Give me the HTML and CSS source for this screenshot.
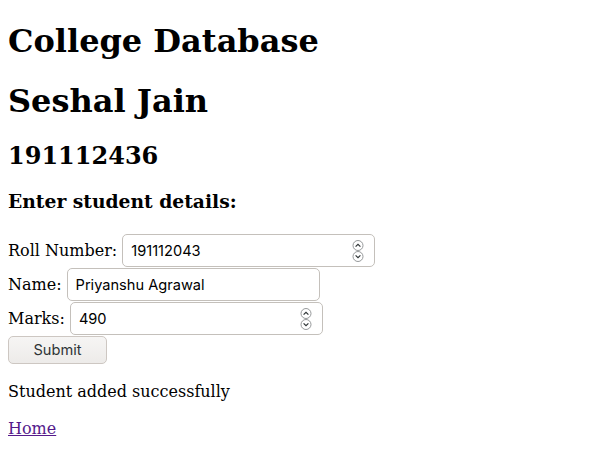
FILE: index.html
```html
<!DOCTYPE html>
<html>
<head>
<meta charset="utf-8">
<title>College Database</title>
<link rel="stylesheet" href="styles.css">
</head>
<body class="page">
<h1 class="title lead">College Database</h1>
<h1 class="title">Seshal Jain</h1>
<h2 class="roll">191112436</h2>
<h3 class="sub">Enter student details:</h3>
<form class="form">
<div class="row"><label class="lbl">Roll Number:</label> <span class="box"><input class="field" type="text" value="191112043"><svg class="spin" width="12" height="22" viewBox="0 0 12 22"><circle cx="6" cy="5.5" r="5" fill="#fff" stroke="#8a8d8e" stroke-width="0.9"/><path d="M3.6 6.6 L6 4.3 L8.4 6.6" fill="none" stroke="#2e3436" stroke-width="1.2"/><circle cx="6" cy="16.5" r="5" fill="#fff" stroke="#8a8d8e" stroke-width="0.9"/><path d="M3.6 15.4 L6 17.7 L8.4 15.4" fill="none" stroke="#2e3436" stroke-width="1.2"/></svg></span></div>
<div class="row"><label class="lbl">Name:</label> <span class="box"><input class="field" type="text" value="Priyanshu Agrawal"></span></div>
<div class="row"><label class="lbl">Marks:</label> <span class="box"><input class="field" type="text" value="490"><svg class="spin" width="12" height="22" viewBox="0 0 12 22"><circle cx="6" cy="5.5" r="5" fill="#fff" stroke="#8a8d8e" stroke-width="0.9"/><path d="M3.6 6.6 L6 4.3 L8.4 6.6" fill="none" stroke="#2e3436" stroke-width="1.2"/><circle cx="6" cy="16.5" r="5" fill="#fff" stroke="#8a8d8e" stroke-width="0.9"/><path d="M3.6 15.4 L6 17.7 L8.4 15.4" fill="none" stroke="#2e3436" stroke-width="1.2"/></svg></span></div>
<button class="btn" type="submit">Submit</button>
</form>
<p class="msg">Student added successfully</p>
<a class="link" href="#">Home</a>
</body>
</html>
```
FILE: styles.css
```css
.page {
  font-family: "DejaVu Serif", serif;
  margin: 8px;
  color: #000;
}
.lead {
  margin-top: 14px;
}
.title + .title {
  margin-top: 22px;
}
.form {
  display: flex;
  flex-direction: column;
  align-items: flex-start;
  gap: 1px;
  padding-top: 3px;
}
.row {
  display: flex;
  align-items: center;
  gap: 5px;
  font-size: 16px;
}
.box {
  display: inline-flex;
  align-items: center;
  box-sizing: border-box;
  width: 253px;
  height: 33px;
  border: 1px solid #c4c0bb;
  border-radius: 5px;
  background: #fff;
  padding: 0 10px 0 8px;
}
.field {
  flex: 1;
  min-width: 0;
  border: none;
  outline: none;
  padding: 0;
  margin: 0;
  background: transparent;
  font-family: "Inter", sans-serif;
  font-size: 14.6px;
  color: #000;
}
.spin {
  flex: none;
  display: block;
}
.btn {
  box-sizing: border-box;
  width: 99px;
  height: 28px;
  margin: 0;
  border: 1px solid #cdc7c2;
  border-radius: 5px;
  background: linear-gradient(#f6f5f4, #edebe9);
  font-family: "Inter", sans-serif;
  font-size: 14.6px;
  color: #2e3436;
  padding: 0;
}
.msg {
  margin: 18px 0 18px;
}
.link {
  color: #551a8b;
}
```
